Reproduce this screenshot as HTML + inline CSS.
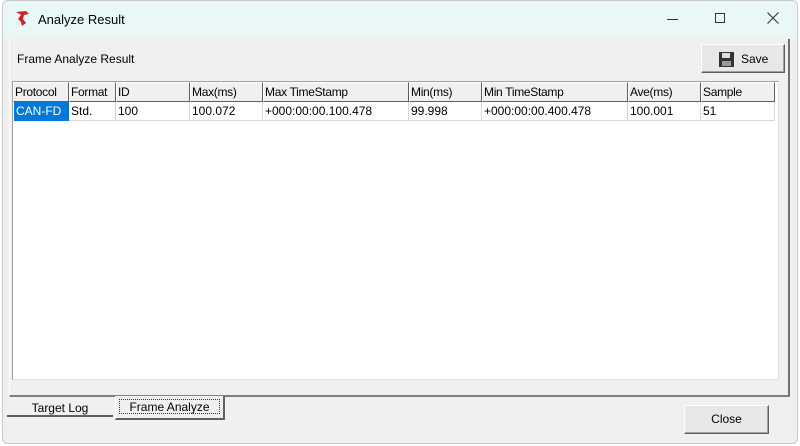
<!DOCTYPE html>
<html><head><style>
*{margin:0;padding:0;box-sizing:border-box}
body{width:800px;height:446px;background:#fff;font-family:"Liberation Sans",sans-serif;font-size:12px;color:#000;position:relative;overflow:hidden}
.win{position:absolute;left:2px;top:0;width:796px;height:444px;background:#f0f0f0;border:1px solid #c8c8c8;border-radius:6px;overflow:hidden}
.title{position:absolute;left:0;top:0;width:100%;height:37px;background:#eaf7f7}
.abs{position:absolute}
.panel{position:absolute;left:6px;top:38px;width:781px;height:358px;border-right:2px solid #707070;border-bottom:2px solid #808080;border-left:1px solid #fff}
.list{position:absolute;left:9px;top:80px;width:767px;height:299px;background:#fff;border:1px solid #a0a0a0;border-right-color:#e0e0e0;border-bottom-color:#e0e0e0}
.hdr{position:absolute;top:0;height:20px;background:#f0f0f0;border-right:1px solid #606060;border-bottom:1px solid #606060;border-left:1px solid #fff;border-top:1px solid #fff;padding:2px 0 0 1px;white-space:nowrap;overflow:hidden;letter-spacing:-0.3px}
.cell{position:absolute;top:20px;height:19px;border-right:1px solid #d8d8d8;border-bottom:1px solid #d8d8d8;padding:2px 0 0 2px;white-space:nowrap}
.btn{position:absolute;background:#e8e8e8;border:1px solid;border-color:#fff #606060 #606060 #fff;box-shadow:inset -1px -1px 0 #a0a0a0;text-align:center}
</style></head><body>
<div class="win">
 <div class="title"></div>
 <svg class="abs" style="left:10px;top:8px" width="20" height="20" viewBox="0 0 20 20"><path d="M3 3 L13 2 L16 5 L11 6 L10 10 L13 14 L9 17 L8 13 L5 10 L8 6 Z" fill="#c8262b"/></svg>
 <div class="abs" style="left:35px;top:11px;font-size:13px">Analyze Result</div>
 <div class="abs" style="left:664px;top:18px;width:11px;height:1px;background:#333"></div>
 <div class="abs" style="left:712px;top:12px;width:10px;height:10px;border:1px solid #333"></div>
 <svg class="abs" style="left:764px;top:11px" width="12" height="12" viewBox="0 0 12 12"><path d="M0.5 0.5 L11.5 11.5 M11.5 0.5 L0.5 11.5" stroke="#333" stroke-width="1.1"/></svg>
 <div class="panel"></div>
 <div class="abs" style="left:14px;top:51px">Frame Analyze Result</div>
 <div class="btn" style="left:698px;top:43px;width:84px;height:29px">
  <svg class="abs" style="left:17px;top:7px" width="15" height="15" viewBox="0 0 15 15"><rect x="0" y="0" width="15" height="15" fill="#333"/><rect x="3" y="1" width="8" height="5" fill="#ddd"/><rect x="3" y="9" width="9" height="5" fill="#999"/></svg>
  <span class="abs" style="left:39px;top:7px">Save</span>
 </div>
 <div class="list">
  <div class="hdr" style="left:0;width:56px">Protocol</div>
  <div class="hdr" style="left:56px;width:47px">Format</div>
  <div class="hdr" style="left:103px;width:74px">ID</div>
  <div class="hdr" style="left:177px;width:73px">Max(ms)</div>
  <div class="hdr" style="left:250px;width:146px">Max TimeStamp</div>
  <div class="hdr" style="left:396px;width:73px">Min(ms)</div>
  <div class="hdr" style="left:469px;width:146px">Min TimeStamp</div>
  <div class="hdr" style="left:615px;width:73px">Ave(ms)</div>
  <div class="hdr" style="left:688px;width:74px">Sample</div>
  <div class="cell" style="left:1px;width:55px;background:#0078d7;color:#fff;border-color:#0078d7">CAN-FD</div>
  <div class="cell" style="left:56px;width:47px">Std.</div>
  <div class="cell" style="left:103px;width:74px">100</div>
  <div class="cell" style="left:177px;width:73px">100.072</div>
  <div class="cell" style="left:250px;width:146px">+000:00:00.100.478</div>
  <div class="cell" style="left:396px;width:73px">99.998</div>
  <div class="cell" style="left:469px;width:146px">+000:00:00.400.478</div>
  <div class="cell" style="left:615px;width:73px">100.001</div>
  <div class="cell" style="left:688px;width:74px">51</div>
 </div>
 <div class="abs" style="left:4px;top:396px;width:106px;height:20px;border-bottom:2px solid #606060;text-align:center;padding-top:4px">Target Log</div>
 <div class="abs" style="left:112px;top:395px;width:110px;height:24px;background:#f0f0f0;border-right:2px solid #606060;border-bottom:2px solid #606060;border-left:1px solid #fff;padding:3px">
  <div style="border:1px dotted #333;height:15px;text-align:center;line-height:14px">Frame Analyze</div>
 </div>
 <div class="btn" style="left:681px;top:404px;width:85px;height:29px;line-height:27px">Close</div>
</div>
</body></html>
